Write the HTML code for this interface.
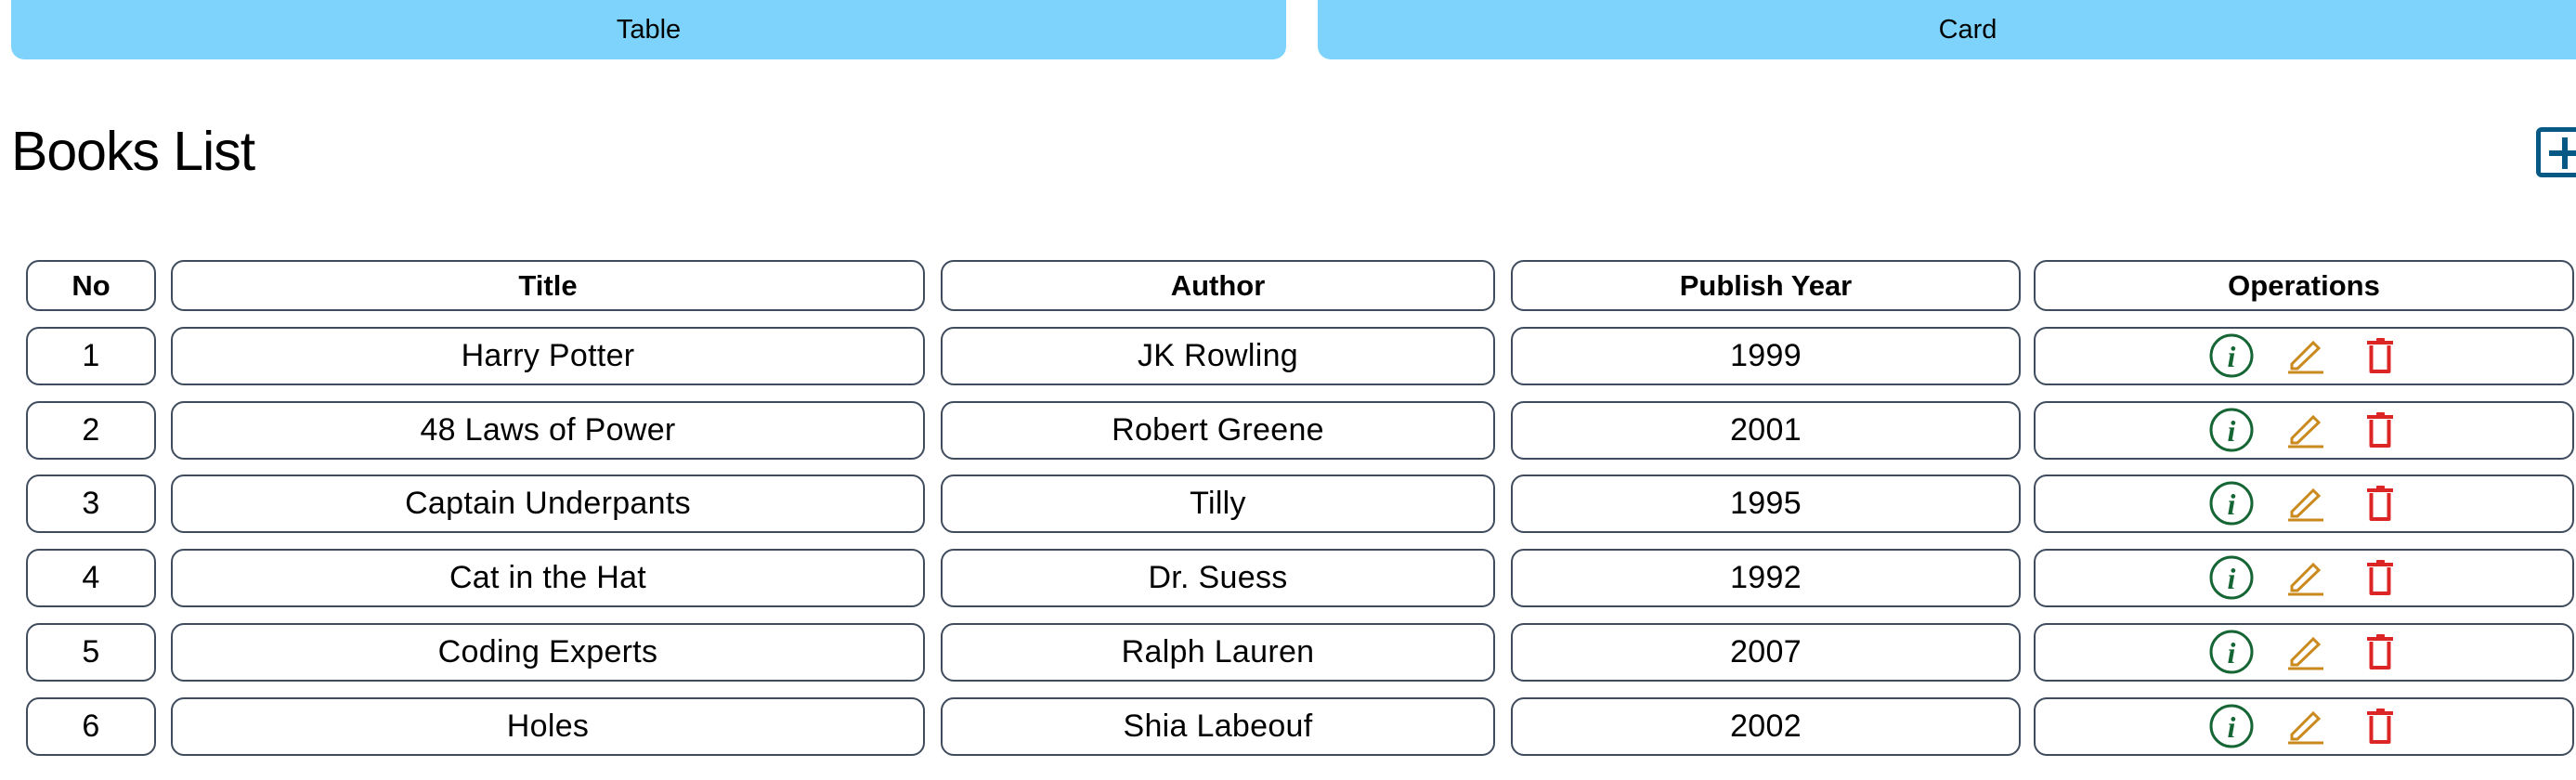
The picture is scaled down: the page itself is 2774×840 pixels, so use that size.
<!DOCTYPE html>
<html><head><meta charset="utf-8"><style>
*{box-sizing:border-box;margin:0;padding:0}
body{width:2774px;height:840px;overflow:hidden;background:#fff;font-family:"Liberation Sans",Arial,sans-serif;color:#000;position:relative}
.btn{position:absolute;top:0;height:64px;background:#7dd3fc;border-radius:0 0 14px 14px;font-size:29px;display:flex;align-items:center;justify-content:center}
h1{position:absolute;left:12px;top:128px;font-size:59px;font-weight:normal;line-height:70px;letter-spacing:-1px}
.plus{position:absolute;left:2731px;top:137px;width:60px;height:54px;border:5px solid #075985;border-radius:6px}
.plus:before{content:"";position:absolute;left:9px;top:20px;width:34px;height:6px;background:#075985}
.plus:after{content:"";position:absolute;left:23px;top:6px;width:6px;height:34px;background:#075985}
.c{position:absolute;border:2px solid #3f4c5e;border-radius:14px;display:flex;align-items:center;justify-content:center;font-size:34px;letter-spacing:0.3px}
.h{font-weight:bold;font-size:31px;letter-spacing:0}
svg{position:absolute}
</style></head><body>
<div class="btn" style="left:12px;width:1373px">Table</div>
<div class="btn" style="left:1419px;width:1400px">Card</div>
<h1>Books List</h1>
<div class="plus"></div>

<div class="c h" style="left:28px;width:140px;top:280px;height:55px">No</div>
<div class="c h" style="left:184px;width:812px;top:280px;height:55px">Title</div>
<div class="c h" style="left:1013px;width:597px;top:280px;height:55px">Author</div>
<div class="c h" style="left:1627px;width:549px;top:280px;height:55px">Publish Year</div>
<div class="c h" style="left:2190px;width:582px;top:280px;height:55px">Operations</div>

<div id="rows"></div>
<script>
var d=[["1","Harry Potter","JK Rowling","1999"],["2","48 Laws of Power","Robert Greene","2001"],["3","Captain Underpants","Tilly","1995"],["4","Cat in the Hat","Dr. Suess","1992"],["5","Coding Experts","Ralph Lauren","2007"],["6","Holes","Shia Labeouf","2002"]];
var cols=[[28,140],[184,812],[1013,597],[1627,549],[2190,582]];
var h="";
d.forEach(function(r,i){var t=Math.round(352+i*79.7);
for(var j=0;j<4;j++)h+='<div class="c" style="left:'+cols[j][0]+'px;width:'+cols[j][1]+'px;top:'+t+'px;height:63px">'+r[j]+'</div>';
h+='<div class="c" style="left:2190px;width:582px;top:'+t+'px;height:63px"></div>';
h+='<svg style="left:2376px;top:'+(t+5)+'px" width="54" height="52" viewBox="0 0 54 52"><circle cx="27" cy="26" r="22" fill="none" stroke="#166534" stroke-width="3"/><text x="27" y="38" text-anchor="middle" font-family="Liberation Serif,serif" font-style="italic" font-weight="bold" font-size="32" fill="#166534">i</text></svg>';
h+='<svg style="left:2462px;top:'+(t+12)+'px" width="44" height="42" viewBox="0 0 44 42"><path d="M6 28 L29 5 L35 11 L12 33 L6 33 Z" fill="none" stroke="#ca8a1e" stroke-width="3" stroke-linejoin="miter"/><line x1="2" y1="37" x2="40" y2="37" stroke="#ca8a1e" stroke-width="3"/></svg>';
h+='<svg style="left:2546px;top:'+(t+11)+'px" width="36" height="42" viewBox="0 0 36 42"><rect x="3" y="4" width="28" height="4" fill="#dc2626"/><rect x="13" y="1" width="9" height="4" rx="1" fill="#dc2626"/><path d="M7.5 9 V37 H26.5 V9" fill="none" stroke="#dc2626" stroke-width="4" stroke-linejoin="round"/></svg>';
});
document.getElementById("rows").innerHTML=h;
</script>
</body></html>
